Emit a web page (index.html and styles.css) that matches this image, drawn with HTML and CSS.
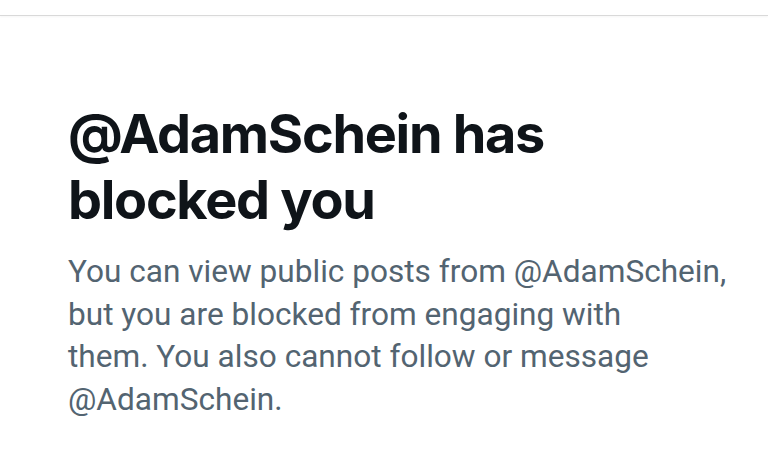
FILE: index.html
```html
<!DOCTYPE html>
<html>
<head>
<meta charset="utf-8">
<link rel="stylesheet" href="styles.css">
</head>
<body>
<div class="topbar"></div>
<main class="blocked">
  <h1 class="title">@AdamSchein has blocked you</h1>
  <p class="desc">You can view public posts from @AdamSchein, but you are blocked from engaging with<br>them. You also cannot follow or message @AdamSchein.</p>
</main>
</body>
</html>
```
FILE: styles.css
```css
html, body {
  margin: 0;
  padding: 0;
  background: #ffffff;
}
body {
  width: 768px;
  height: 452px;
  overflow: hidden;
  font-family: Roboto, "Liberation Sans", sans-serif;
}
.topbar {
  height: 15px;
  border-bottom: 1px solid #d9d9d9;
  box-shadow: 0 1px 2px rgba(0,0,0,0.04);
}
.blocked {
  padding: 85px 30px 0 68px;
}
.title {
  margin: 0;
  font-family: Inter, Roboto, sans-serif;
  font-size: 54px;
  line-height: 66px;
  font-weight: 700;
  letter-spacing: -1.3px;
  color: #0f1419;
  width: 560px;
}
.desc {
  margin: 18px 0 0;
  font-size: 31.6px;
  line-height: 42.5px;
  color: #536471;
  font-weight: 400;
  width: 668px;
}
```
